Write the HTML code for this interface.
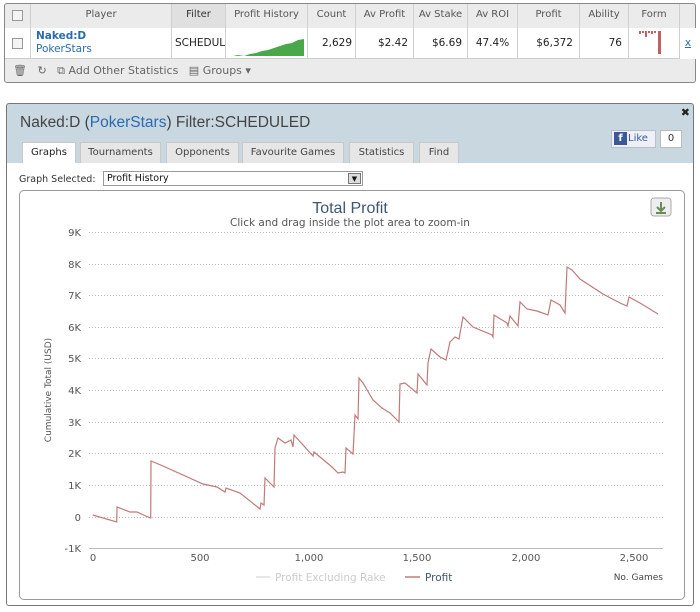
<!DOCTYPE html>
<html><head><meta charset="utf-8"><style>
*{margin:0;padding:0;box-sizing:border-box}
body{width:700px;height:612px;background:#fff;font-family:"DejaVu Sans","Liberation Sans",sans-serif;position:relative;overflow:hidden;color:#333}
.a{position:absolute}
.box{left:4px;top:3px;width:692px;height:80px;border:1px solid #888;border-radius:3px;background:#ebebeb}
.c{position:absolute;font-size:10px;text-align:center;border-right:1px solid #d0d0d0;color:#555}
.hd{top:0;height:24px;line-height:22px}
.rw{top:24px;height:31px;line-height:31px;background:#fff;border-bottom:1px solid #ccc;color:#222;font-size:10.5px}
.cb{width:11px;height:11px;border:1px solid #999;background:#f4f4f4;position:absolute;left:7px}
.panel{left:6px;top:103px;width:688px;height:503px;border:1px solid #777;border-radius:3px;background:#c9d8e0;overflow:hidden}
.tab{position:absolute;top:38px;height:21px;line-height:20px;font-size:10px;color:#444;background:#e6e6e6;border:1px solid #c8c8c8;border-bottom:none;text-align:center}
</style></head><body>
<div class="a box">
 <div class="c hd" style="left:0;width:26px"><div class="cb" style="top:6px"></div></div>
 <div class="c hd" style="left:26px;width:141px">Player</div>
 <div class="c hd" style="left:167px;width:54px;background:#e0e0e0;color:#333">Filter</div>
 <div class="c hd" style="left:221px;width:82px">Profit History</div>
 <div class="c hd" style="left:303px;width:48px">Count</div>
 <div class="c hd" style="left:351px;width:58px">Av Profit</div>
 <div class="c hd" style="left:409px;width:54px">Av Stake</div>
 <div class="c hd" style="left:463px;width:50px">Av ROI</div>
 <div class="c hd" style="left:513px;width:62px">Profit</div>
 <div class="c hd" style="left:575px;width:49px">Ability</div>
 <div class="c hd" style="left:624px;width:51px">Form</div>
 <div class="c hd" style="left:675px;width:16px;border:none"></div>
 <div class="a" style="left:0;top:24px;width:690px;height:31px;background:#fff;border-top:1px solid #ccc;border-bottom:1px solid #ccc"></div>
 <div class="c rw" style="left:0;width:26px"><div class="cb" style="top:10px"></div></div>
 <div class="c rw" style="left:26px;width:141px;text-align:left;padding-left:5px;line-height:13px;padding-top:2px;color:#2a6ab0"><b>Naked:D</b><br>PokerStars</div>
 <div class="c rw" style="left:167px;width:54px;text-align:left;padding-left:3px;overflow:hidden">SCHEDUL</div>
 <div class="c rw" style="left:221px;width:82px"><svg width="82" height="30" class="a" style="left:0;top:0"><path d="M7 28 L12 27 L18 28 L24 26 L30 25 L36 23 L42 22 L48 20 L54 18 L60 16 L66 15 L72 12 L78 11 L78 28 Z" fill="#4aa84a"/></svg></div>
 <div class="c rw" style="left:303px;width:48px;text-align:right;padding-right:3px">2,629</div>
 <div class="c rw" style="left:351px;width:58px;text-align:right;padding-right:5px">$2.42</div>
 <div class="c rw" style="left:409px;width:54px;text-align:right;padding-right:5px">$6.69</div>
 <div class="c rw" style="left:463px;width:50px">47.4%</div>
 <div class="c rw" style="left:513px;width:62px;text-align:right;padding-right:6px">$6,372</div>
 <div class="c rw" style="left:575px;width:49px;text-align:right;padding-right:6px">76</div>
 <div class="c rw" style="left:624px;width:51px"><svg width="51" height="30" class="a" style="left:0;top:0"><g fill="#c06060"><rect x="10" y="3" width="2" height="3"/><rect x="13" y="3" width="2" height="2"/><rect x="16" y="3" width="2" height="6"/><rect x="19" y="3" width="2" height="2"/><rect x="22" y="3" width="2" height="3"/><rect x="25" y="3" width="2" height="2"/><rect x="29" y="3" width="3" height="23"/></g></svg></div>
 <div class="c rw" style="left:675px;width:16px;border:none;color:#2a6ab0;text-decoration:underline">x</div>
 <div class="a" style="left:8px;top:60px;font-size:11px;color:#666">🗑&nbsp;&nbsp;&nbsp;↻&nbsp;&nbsp;&nbsp;⧉ Add Other Statistics&nbsp;&nbsp;&nbsp;▤ Groups ▾</div>
</div>

<div class="a panel">
 <div class="a" style="left:13px;top:10px;font-family:'Liberation Sans',sans-serif;font-size:15.5px;color:#444">Naked:D (<span style="color:#2a6ab0">PokerStars</span>) Filter:SCHEDULED</div>
 <div class="a" style="right:3px;top:2px;font-size:11px;font-weight:bold;color:#222">✖</div>
 <div class="a" style="left:604px;top:26px;width:45px;height:18px;background:#eef0f5;border:1px solid #b8c0d0;font-size:10px;line-height:16px;color:#3b5998"><span style="display:inline-block;width:13px;height:13px;background:#3b5998;color:#fff;font-weight:bold;text-align:center;line-height:14px;margin:1px 1px 0 2px;vertical-align:top">f</span>Like</div>
 <div class="a" style="left:653px;top:26px;width:22px;height:18px;background:#fff;border:1px solid #bbb;font-size:10px;line-height:16px;text-align:center">0</div>
 <div class="tab" style="left:15px;width:54px;background:#fff;height:22px;color:#222">Graphs</div>
 <div class="tab" style="left:73px;width:81px">Tournaments</div>
 <div class="tab" style="left:159px;width:73px">Opponents</div>
 <div class="tab" style="left:235px;width:102px">Favourite Games</div>
 <div class="tab" style="left:342px;width:65px">Statistics</div>
 <div class="tab" style="left:412px;width:40px">Find</div>
 <div class="a" style="left:0;top:59px;width:688px;height:450px;background:#fff"></div>
 <div class="a" style="left:12px;top:70px;font-size:9.5px;color:#333">Graph Selected:</div>
 <div class="a" style="left:96px;top:67px;width:260px;height:15px;border:1px solid #999;font-size:9.5px;line-height:13px;padding-left:3px;color:#111">Profit History<span class="a" style="right:1px;top:1px;width:13px;height:11px;border:1px solid #777;background:#ddd;font-size:7px;line-height:10px;text-align:center">▼</span></div>
 <div class="a" style="left:12px;top:86px;width:666px;height:410px;border:1px solid #999;border-radius:5px"></div>
</div>

<svg class="a" style="left:0;top:0" width="700" height="612">
 <text x="350" y="213" font-size="16" fill="#3e576f" text-anchor="middle" font-family="Liberation Sans, sans-serif">Total Profit</text>
 <text x="350" y="226" font-size="10.5" fill="#555" text-anchor="middle" font-family="DejaVu Sans, sans-serif">Click and drag inside the plot area to zoom-in</text>
 <rect x="651" y="198" width="20" height="18" rx="3" fill="#eee" stroke="#aaa"/>
 <path d="M661 202v8M657 207l4 4 4-4M656 213h10" stroke="#6a8a5a" stroke-width="2" fill="none"/>
 <g stroke="#bbb" stroke-dasharray="1,2" stroke-width="1">
  <line x1="89" x2="663" y1="232.5" y2="232.5"/><line x1="89" x2="663" y1="264.5" y2="264.5"/><line x1="89" x2="663" y1="295.5" y2="295.5"/><line x1="89" x2="663" y1="327.5" y2="327.5"/><line x1="89" x2="663" y1="358.5" y2="358.5"/><line x1="89" x2="663" y1="390.5" y2="390.5"/><line x1="89" x2="663" y1="422.5" y2="422.5"/><line x1="89" x2="663" y1="453.5" y2="453.5"/><line x1="89" x2="663" y1="485.5" y2="485.5"/><line x1="89" x2="663" y1="517.5" y2="517.5"/>
 </g>
 <line x1="89" x2="663" y1="548.5" y2="548.5" stroke="#bbb"/>
 <g font-size="10" fill="#555" text-anchor="end" font-family="DejaVu Sans, sans-serif">
  <text x="81" y="236">9K</text><text x="81" y="268">8K</text><text x="81" y="299">7K</text><text x="81" y="331">6K</text><text x="81" y="362">5K</text><text x="81" y="394">4K</text><text x="81" y="426">3K</text><text x="81" y="457">2K</text><text x="81" y="489">1K</text><text x="81" y="521">0</text><text x="81" y="552">-1K</text>
 </g>
 <g font-size="10" fill="#555" text-anchor="middle" font-family="DejaVu Sans, sans-serif">
  <text x="93" y="561">0</text><text x="200" y="561">500</text><text x="309" y="561">1,000</text><text x="417" y="561">1,500</text><text x="526" y="561">2,000</text><text x="634" y="561">2,500</text>
 </g>
 <text transform="translate(51,390) rotate(-90)" font-size="9" fill="#555" text-anchor="middle" font-family="DejaVu Sans, sans-serif">Cumulative Total (USD)</text>
 <polyline fill="none" stroke="#c07a7a" stroke-width="1.2" points="92.7,515 116.7,522 117,507 130,512 137,512 148,517 150.7,518 151,461 163,466 203,484 217,487 225,492 226,488 240,493 260,509 261,503 264,505 265,478 274,487 275,448 278,438 285,443 291,440 293,447 294,435 313,456 314,452 332,467 338,473 343,472 345,473 346,448 353,454 355,415 358,419 359,378 363,383 373,400 382,408 390,413 399,422 400,384 405,383 417,393 418,374 427,385 428,363 431,349 440,357 446,360 450,342 455,337 459,339 463,317 473,327 492,335 493,337 494,315 507,323 508,326 510,316 518,326 520,302 527,309 537,311 548,315 551,300 560,305 565,313 567,267 572,270 580,279 603,294 620,303 627,306 629,297 640,303 658,314"/>
 <line x1="256" x2="270" y1="577" y2="577" stroke="#ccc"/>
 <text x="275" y="581" font-size="10.5" fill="#ccc" font-family="DejaVu Sans, sans-serif">Profit Excluding Rake</text>
 <line x1="405" x2="420" y1="577" y2="577" stroke="#c07a7a" stroke-width="1.5"/>
 <text x="425" y="581" font-size="10.5" fill="#3e576f" font-family="DejaVu Sans, sans-serif">Profit</text>
 <text x="663" y="580" font-size="9" fill="#444" text-anchor="end" font-family="DejaVu Sans, sans-serif">No. Games</text>
</svg>
</body></html>
